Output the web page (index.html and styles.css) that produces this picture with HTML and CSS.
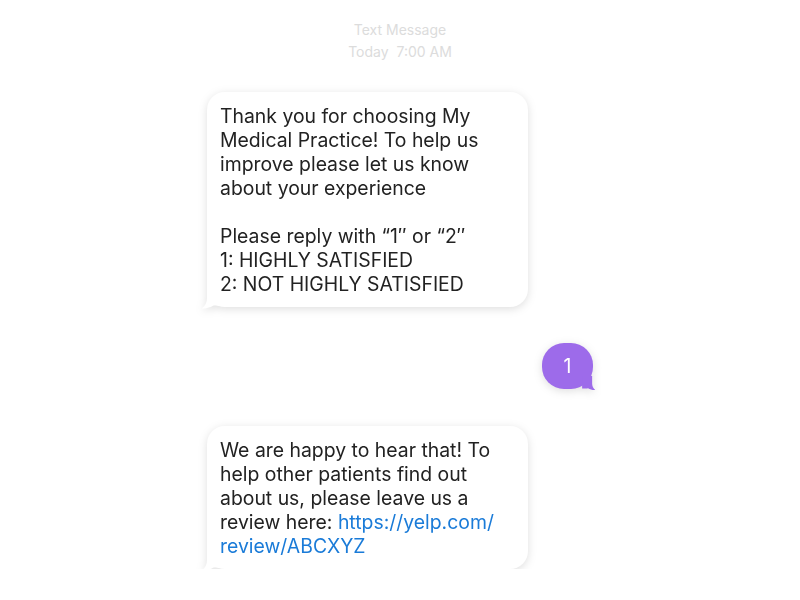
FILE: index.html
```html
<!DOCTYPE html>
<html lang="en">
<head>
    <meta charset="UTF-8">
    <meta name="viewport" content="width=device-width, initial-scale=1.0">
    <title>Text Message</title>
    <link rel="stylesheet" href="styles.css">
</head>
<body>
    <div class="thread">
        <div class="meta">
            <div>Text Message</div>
            <div>Today&nbsp;&nbsp;7:00 AM</div>
        </div>

        <div class="msg in">
            <p>Thank you for choosing My Medical Practice! To help us improve please let us know about your experience</p>
            <p class="gap">Please reply with “1″ or “2″<br>1: HIGHLY SATISFIED<br>2: NOT HIGHLY SATISFIED</p>
            <svg class="tail" width="22" height="24" viewBox="0 0 22 24"><path d="M6 0 L6 12 C6 16 4.5 19.5 1 22.5 C5 23 9 21.5 12.5 19.6 C15 20 18 20 22 20 L22 0 Z"/></svg>
        </div>

        <div class="msg out">
            <p>1</p>
            <svg class="tail" width="14" height="15" viewBox="0 0 22 24"><path d="M6 0 L6 12 C6 16 4.5 19.5 1 22.5 C5 23 9 21.5 12.5 19.6 C15 20 18 20 22 20 L22 0 Z"/></svg>
        </div>

        <div class="msg in">
            <p>We are happy to hear that! To help other patients find out about us, please leave us a review here: <a class="link" href="#">https://yelp.com/</a><wbr><a class="link" href="#">review/ABCXYZ</a></p>
            <svg class="tail" width="22" height="24" viewBox="0 0 22 24"><path d="M6 0 L6 12 C6 16 4.5 19.5 1 22.5 C5 23 9 21.5 12.5 19.6 C15 20 18 20 22 20 L22 0 Z"/></svg>
        </div>
    </div>
</body>
</html>
```

FILE: styles.css
```css
*{
    margin: 0;
    padding: 0;
}
body{
    background-color: #fff;
    font-family: Inter, "Liberation Sans", sans-serif;
    color: #222;
}
.thread{
    width: 386px;
    margin: 0 auto;
    padding-top: 19px;
    display: flex;
    flex-direction: column;
}
.meta{
    text-align: center;
    font-size: 14px;
    line-height: 22px;
    color: #dcdcdc;
    margin-bottom: 29px;
}
.msg{
    position: relative;
    font-size: 19.4px;
    line-height: 24px;
    border-radius: 18px;
    filter: drop-shadow(0 2px 4px rgba(0, 0, 0, 0.13));
}
.msg .gap{
    margin-top: 24px;
}
.msg .tail{
    position: absolute;
    bottom: -3px;
    z-index: -1;
}
.msg.in{
    align-self: flex-start;
    width: 321px;
    box-sizing: border-box;
    padding: 12px 13px 11px;
    background-color: #fff;
}
.msg.in .tail{
    left: -6px;
    fill: #fff;
}
.msg.in + .msg.out{
    margin-top: 36px;
}
.msg.out + .msg.in{
    margin-top: 37px;
}
.msg.out{
    align-self: flex-end;
    width: 51px;
    box-sizing: border-box;
    padding: 11px 0;
    text-align: center;
    border-radius: 22px;
    background-color: #9d6bea;
    color: #fff;
}
.msg.out .tail{
    right: -3px;
    bottom: -2px;
    fill: #9d6bea;
    transform: scaleX(-1);
}
.msg .link{
    color: #1a7bd8;
    text-decoration: none;
}
```
